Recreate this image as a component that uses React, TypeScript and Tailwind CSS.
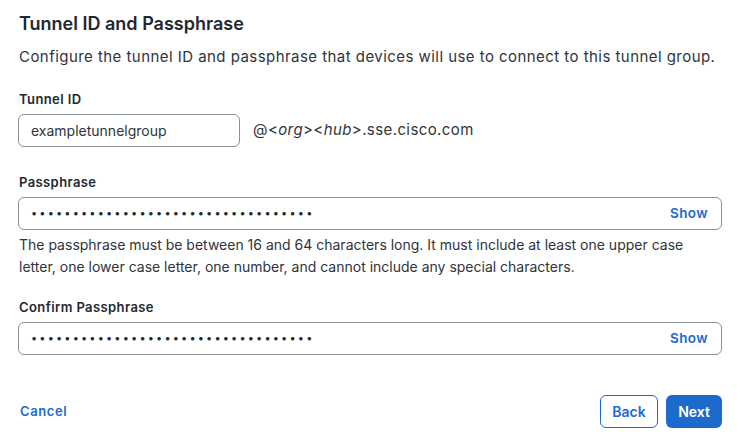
import { useState } from 'react'

const dots = '•'.repeat(34)

function SecretField({ label }: { label: string }) {
  return (
    <div className="flex flex-col">
      <label className="ml-[1px] text-[13px] font-semibold tracking-[0.4px] text-[#23282e] leading-4">{label}</label>
      <div className="mt-[7px] h-[33px] rounded-md border-[1.5px] border-[#889099] flex items-center justify-between pl-[12px] pr-[13px]">
        <span className="text-[11px] tracking-[2.15px] text-[#23282e]">{dots}</span>
        <button className="text-[13.5px] font-semibold tracking-[0.4px] text-[#1d69cc]">Show</button>
      </div>
    </div>
  )
}

export default function App() {
  const [tunnel] = useState('exampletunnelgroup')
  return (
    <div className="w-[737px] h-[440px] bg-white pl-[18px] pr-[15px] pt-[12px] font-['Inter',sans-serif] text-[#23282e] flex flex-col">
      <h1 className="ml-[1px] text-[18px] font-semibold leading-6">Tunnel ID and Passphrase</h1>
      <p className="ml-[1px] mt-[9px] text-[15px] tracking-[0.45px] leading-6 text-[#2f343a]">
        Configure the tunnel ID and passphrase that devices will use to connect to this tunnel group.
      </p>

      <div className="mt-[22px] flex flex-col">
        <label className="ml-[1px] text-[13px] font-semibold tracking-[0.4px] leading-4">Tunnel ID</label>
        <div className="mt-[7px] flex items-center gap-[13px]">
          <div className="w-[222px] h-[33px] rounded-md border-[1.5px] border-[#889099] flex items-center pl-[12px] text-[14px] text-[#2f343a]">
            {tunnel}
          </div>
          <span className="text-[15px] tracking-[0.4px] text-[#2f343a]">
            @&lt;<i>org</i>&gt;&lt;<i>hub</i>&gt;.sse.cisco.com
          </span>
        </div>
      </div>

      <div className="mt-[27px]">
        <SecretField label="Passphrase" />
        <p className="ml-[1px] mt-[4px] text-[14px] leading-[22px] text-[#2f343a]">
          The passphrase must be between 16 and 64 characters long. It must include at least one upper case
          <br />
          letter, one lower case letter, one number, and cannot include any special characters.
        </p>
      </div>

      <div className="mt-[21px]">
        <SecretField label="Confirm Passphrase" />
      </div>

      <div className="mt-[40px] flex items-center justify-between">
        <button className="ml-[2px] text-[13px] font-semibold tracking-[0.6px] text-[#1d69cc]">Cancel</button>
        <div className="flex gap-[8px]">
          <button className="h-[33px] w-[58px] rounded-md border-[1.5px] border-[#1d69cc] text-[14px] font-semibold text-[#1d69cc]">
            Back
          </button>
          <button className="h-[33px] w-[56px] rounded-md bg-[#1d69cc] text-[14px] font-semibold text-white">
            Next
          </button>
        </div>
      </div>
    </div>
  )
}
